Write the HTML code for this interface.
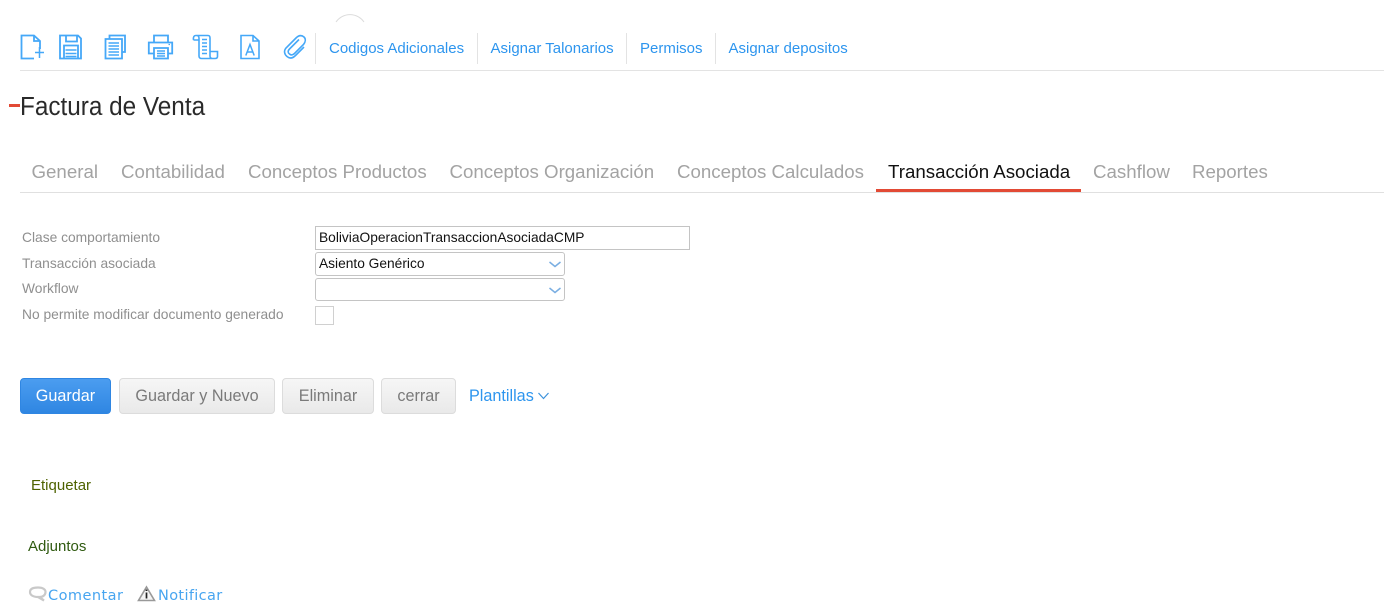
<!DOCTYPE html>
<html><head><meta charset="utf-8">
<style>
html,body{margin:0;padding:0;background:#fff;width:1384px;height:614px;overflow:hidden;font-family:"Liberation Sans",sans-serif}
.a{position:absolute;white-space:nowrap}
.link{color:#2d95ee;font-size:15px;top:40px;line-height:18px}
.sep{position:absolute;width:1px;background:#e3e3e3;top:33px;height:31px}
.tab{position:absolute;top:160px;font-size:18.700px;line-height:24px;color:#a3a3a3;white-space:nowrap}
.lbl{position:absolute;left:22px;font-size:13.800px;line-height:16px;color:#8f8f8f;white-space:nowrap}
.box{position:absolute;box-sizing:border-box;border:1px solid #c4c4c4;background:#fff;font-size:13.750px;color:#111;line-height:22px;padding-left:3px}
.btn{position:absolute;top:378px;height:36px;box-sizing:border-box;border:1px solid #dcdcdc;border-radius:4px;background:linear-gradient(#f6f6f6,#e9e9e9);color:#7a7a7a;font-size:16.200px;line-height:35px;text-align:center}
svg{position:absolute;overflow:visible}
</style></head><body>
<svg style="left:0;top:0" width="340" height="70" fill="none" stroke="#45a8f8" stroke-width="1.800">
<path d="M34 58.500H21.500V35.500H34L40 41V49M34 35.500V41H40"/>
<path d="M35 52.500H44M39.500 47V58" stroke-width="1.500"/>
<path d="M60 35.500H78L81 38.500V58.500H60ZM66 35.500V41.500H77V35.500M64 58.500V45.500H78V58.500"/>
<path d="M65.500 50H76.500M65.500 53.500H76.500M65.500 56.500H76.500" stroke-width="1.500"/>
<path d="M109.500 39V35.500H125V52H122M105.500 39H122V58.500H105.500Z"/>
<path d="M108.500 43H119M108.500 46H119M108.500 49H119M108.500 52H119M108.500 55H119" stroke-width="1.500"/>
<path d="M154 42V35.500H168V42M154 53.500H148.800V42.500H172.200V53.500H168M154 48H168V58.500H154Z"/>
<path d="M157 51H165M157 53.500H165M157 56H165" stroke-width="1.400"/>
<path d="M168.500 44.500H170" stroke-width="1.200"/>
<path d="M193.500 40C193 37 194 35.500 196 35.500H208C209.500 35.500 210 36.500 210 38V51.500H217.500V56.500C217.500 58 216.500 58.500 215 58.500H201.500C200 58.500 199 57.500 199 56V38C199 36.500 198 35.500 196.500 35.500M193.500 40H199M210 51.500V56C210 57.500 211 58.500 212.500 58.500" stroke-width="1.600"/>
<path d="M202 39.500H207M202 43H207M202 46.500H207M202 50H207M202 53.500H207" stroke-width="1.500"/>
<path d="M253 35.500H241V58.500H259V41ZM253 35.500V41H259" stroke-width="1.600"/>
<path d="M245.800 55.500L250 44.500L254.200 55.500M247 52H253" stroke-width="1.500"/>
<path d="M304 37C301 34.500 298 36 296 38L286 48C283.500 51 284.500 54.500 287 56.500C290 59 293 58 295.500 55.500L304 47M299 39.500L289.500 49C287.500 51 288 53 289.500 54C291 55.500 293 55 294.500 53.500L303.500 44.500C305.500 42 306 39 304 37" stroke-width="1.600"/>
<path d="M336 22A17 17 0 0 1 364 22" stroke="#dcdcdc" stroke-width="1"/>
</svg>
<div class="sep" style="left:315px"></div>
<div class="a link" style="left:329px">Codigos Adicionales</div>
<div class="sep" style="left:477px"></div>
<div class="a link" style="left:490.500px">Asignar Talonarios</div>
<div class="sep" style="left:626px"></div>
<div class="a link" style="left:640px">Permisos</div>
<div class="sep" style="left:715px"></div>
<div class="a link" style="left:728.500px">Asignar depositos</div>
<div class="a" style="left:20px;top:70px;width:1364px;height:1px;background:#e3e3e3"></div>

<div class="a" style="left:9px;top:104px;width:11px;height:3px;background:#e24a35"></div>
<div class="a" style="left:20px;top:92px;font-size:25.500px;line-height:30px;color:#2a2a2a;transform:scaleX(.953);transform-origin:0 0">Factura de Venta</div>

<div class="tab" style="left:31.500px">General</div>
<div class="tab" style="left:121px">Contabilidad</div>
<div class="tab" style="left:248px">Conceptos Productos</div>
<div class="tab" style="left:449.500px">Conceptos Organización</div>
<div class="tab" style="left:677px">Conceptos Calculados</div>
<div class="tab" style="left:888px;color:#111">Transacción Asociada</div>
<div class="tab" style="left:1093px">Cashflow</div>
<div class="tab" style="left:1192px">Reportes</div>
<div class="a" style="left:20px;top:192px;width:1364px;height:1px;background:#e0e0e0"></div>
<div class="a" style="left:876px;top:189px;width:205px;height:3px;background:#e24a35"></div>

<div class="lbl" style="top:230px">Clase comportamiento</div>
<div class="lbl" style="top:256px">Transacción asociada</div>
<div class="lbl" style="top:281px">Workflow</div>
<div class="lbl" style="top:307px">No permite modificar documento generado</div>
<div class="box" style="left:315px;top:226px;width:375px;height:24px">BoliviaOperacionTransaccionAsociadaCMP</div>
<div class="box" style="left:315px;top:252px;width:250px;height:24px;border-radius:3px">Asiento Genérico</div>
<div class="box" style="left:315px;top:278px;width:250px;height:23px;border-radius:3px"></div>
<div class="box" style="left:315px;top:306px;width:19px;height:19px;border-color:#d0d0d0"></div>
<svg style="left:0;top:0" width="600" height="310" fill="none" stroke="#7aaee2" stroke-width="1.500">
<path d="M549.500 262L555 266.500L560.500 262M549.500 288L555 292.500L560.500 288"/>
</svg>

<div class="btn" style="left:20px;width:91px;background:linear-gradient(#4b9df0,#2f86e2);border-color:#2f86e2;color:#fff;font-size:16.200px">Guardar</div>
<div class="btn" style="left:119px;width:156px">Guardar y Nuevo</div>
<div class="btn" style="left:282px;width:92px">Eliminar</div>
<div class="btn" style="left:381px;width:75px">cerrar</div>
<div class="a" style="left:469px;top:387px;font-size:16.200px;line-height:18px;color:#2d95ee">Plantillas</div>
<svg style="left:0;top:0" width="560" height="410" fill="none" stroke="#3d93dc" stroke-width="1.200">
<path d="M538.500 393L543.500 398.500L548.500 393"/>
</svg>

<div class="a" style="left:31px;top:477px;font-size:15px;line-height:18px;color:#4e6200">Etiquetar</div>
<div class="a" style="left:28px;top:538px;font-size:15px;line-height:18px;color:#2f5a10">Adjuntos</div>

<svg style="left:0;top:0" width="170" height="614" fill="none">
<path d="M30 592C30 589 33 587.500 38 587.500C43 587.500 45.500 589.500 45.500 592C45.500 595 43 597 39.500 597L44 600.500L38 597C33 597 30 595 30 592Z" stroke="#c9c9c9" stroke-width="2.200"/>
<path d="M146.500 587L154.500 600.500H138.500Z" stroke="#999" stroke-width="1.600" fill="#f4f4f4"/>
<path d="M146.500 592.500V598.500M146.500 589.500V591" stroke="#222" stroke-width="1.700"/>
</svg>
<div class="a" style="left:48px;top:587px;font-family:'DejaVu Sans',sans-serif;font-size:14.500px;line-height:18px;color:#47a5f0;letter-spacing:.45px">Comentar</div>
<div class="a" style="left:158px;top:587px;font-family:'DejaVu Sans',sans-serif;font-size:14.500px;line-height:18px;color:#47a5f0;letter-spacing:.35px">Notificar</div>
</body></html>
